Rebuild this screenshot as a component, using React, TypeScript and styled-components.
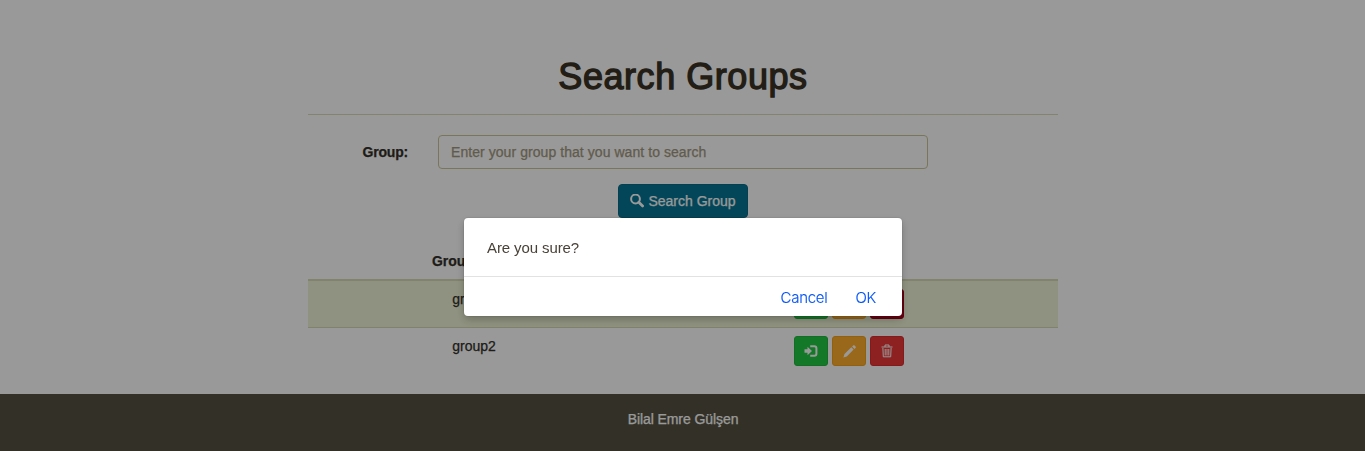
import React from 'react';
import styled, { createGlobalStyle } from 'styled-components';

const GlobalStyle = createGlobalStyle`
  * { box-sizing: border-box; }
  body {
    margin: 0;
    background: #fff;
    color: #33302a;
    font: 14px/20px "Liberation Sans", Arial, sans-serif;
    overflow: hidden;
  }
`;

const Page = styled.div`
  min-height: 451px;
  display: flex;
  flex-direction: column;
  -webkit-text-stroke: 0.25px currentColor;
`;

const Container = styled.main`
  width: 750px;
  margin: 0 auto;
  padding-top: 57px;
  position: relative;
  left: 0.5px;
`;

const Title = styled.h1`
  margin: 0;
  height: 57px;
  font-size: 36px;
  line-height: 39px;
  font-weight: 400;
  letter-spacing: 0.55px;
  -webkit-text-stroke: 1.3px #393226;
  color: #393226;
  text-align: center;
`;

const Divider = styled.hr`
  margin: 0 0 20px;
  border: 0;
  height: 1px;
  background: #d9dcb9;
`;

const FormRow = styled.div`
  display: flex;
  align-items: center;
  height: 34px;
  margin-bottom: 15px;
`;

const Label = styled.label`
  width: 100px;
  margin-right: 30px;
  font-weight: 700;
  text-align: right;
  letter-spacing: -0.2px;
`;

const Input = styled.input`
  width: 490px;
  height: 34px;
  padding: 6px 12px;
  border: 1px solid #c9c798;
  border-radius: 4px;
  background: #fff;
  font: inherit;
  letter-spacing: 0.06px;
  &::placeholder { color: #a29880; opacity: 1; }
`;

const SearchButton = styled.button`
  display: flex;
  align-items: center;
  justify-content: center;
  gap: 4px;
  width: 130px;
  height: 34px;
  margin: 0 auto 33px;
  padding: 0;
  border: 1px solid #066b87;
  border-radius: 4px;
  background: #087694;
  color: #fff;
  font: inherit;
  -webkit-text-stroke: inherit;
`;

const Row = styled.div<{ $striped?: boolean }>`
  display: grid;
  grid-template-columns: 332px 418px;
  justify-items: center;
  height: ${(p) => (p.$striped ? 47 : 46)}px;
  padding-top: 8px;
  background: ${(p) => (p.$striped ? '#eff4d5' : 'transparent')};
  border-bottom: ${(p) => (p.$striped ? '1px solid #d6d9b2' : '0')};
`;

const HeadRow = styled(Row)`
  height: 30px;
  padding-top: 0;
  font-weight: 700;
  border-bottom: 2px solid #d9dab4;
`;

const Actions = styled.div`
  display: flex;
  gap: 4px;
`;

const ActionButton = styled.button<{ $bg: string; $edge: string }>`
  display: flex;
  align-items: center;
  justify-content: center;
  width: 34px;
  height: 30px;
  padding: 0;
  border: 1px solid ${(p) => p.$edge};
  border-radius: 3px;
  background: ${(p) => p.$bg};
  color: #fff;
`;

const Footer = styled.footer`
  height: 57px;
  margin-top: 20px;
  padding: 15px 0 0 1px;
  background: #555041;
  color: #fff;
  text-align: center;
  letter-spacing: -0.08px;
`;

const Backdrop = styled.div`
  position: fixed;
  inset: 0;
  background: rgba(0, 0, 0, 0.4);
`;

const Dialog = styled.div`
  position: absolute;
  left: 464px;
  top: 218px;
  width: 438px;
  height: 98px;
  border-radius: 4px;
  background: #fff;
  box-shadow: 0 0 0 1px rgba(0, 0, 0, 0.06), 0 4px 8px rgba(0, 0, 0, 0.22);
`;

const Message = styled.div`
  height: 59px;
  padding: 20px 23px 0;
  border-bottom: 1px solid #e2e2e2;
  color: #4a4238;
  font-size: 15px;
  letter-spacing: -0.1px;
`;

const DialogActions = styled.div`
  display: flex;
  justify-content: flex-end;
  gap: 28px;
  padding: 11px 26px 0 0;
`;

const LinkButton = styled.button`
  padding: 0;
  border: 0;
  background: none;
  color: #0b57f5;
  font: 300 15px/20px Inter, sans-serif;
  letter-spacing: -0.28px;
  -webkit-text-stroke: 0.15px currentColor;
`;

const SearchIcon = () => (
  <svg width="14" height="14" viewBox="0 0 14 14" fill="none" stroke="currentColor">
    <circle cx="5.5" cy="5" r="4.4" strokeWidth="2" />
    <path d="M8.8 8.2 12.6 12" strokeWidth="2.7" strokeLinecap="round" />
  </svg>
);

const JoinIcon = () => (
  <svg width="14" height="12" viewBox="0 0 14 12" fill="currentColor">
    <path d="M.5 4.3h3V1.8L8 6l-4.5 4.2V7.7h-3z" />
    <path d="M6.2 1.2h4.2c1.3 0 2 .7 2 2v5.6c0 1.3-.7 2-2 2H6.2" fill="none" stroke="currentColor" strokeWidth="2" />
  </svg>
);

const PencilIcon = () => (
  <svg width="13" height="13" viewBox="0 0 13 13" fill="currentColor">
    <path d="m.4 12.6 1.1-3.5 6.8-6.8 2.3 2.3-6.8 6.8zM9.1 1.5l1-1c.5-.5 1-.5 1.5 0l.9.9c.5.5.5 1 0 1.5l-1.1 1z" />
  </svg>
);

const TrashIcon = () => (
  <svg width="12" height="14" viewBox="0 0 12 14" fill="none" stroke="currentColor">
    <path d="M.5 3h11M4 3V1h4v2M1.9 4l.4 8.8h7.4l.4-8.8M4.2 5v6.5M6 5v6.5M7.8 5v6.5" />
  </svg>
);

const RowActions = ({ pressed }: { pressed?: boolean }) => (
  <Actions>
    <ActionButton $bg="#21c842" $edge="#1eb83c" aria-label="Join"><JoinIcon /></ActionButton>
    <ActionButton $bg="#ffad2d" $edge="#f5a11b" aria-label="Edit"><PencilIcon /></ActionButton>
    <ActionButton $bg={pressed ? '#b5001e' : '#eb3838'} $edge={pressed ? '#a0001a' : '#dc2c2c'} aria-label="Delete">
      <TrashIcon />
    </ActionButton>
  </Actions>
);

export default function App() {
  return (
    <>
      <GlobalStyle />
      <Page>
        <Container>
          <Title>Search Groups</Title>
          <Divider />
          <FormRow>
            <Label htmlFor="group">Group:</Label>
            <Input id="group" placeholder="Enter your group that you want to search" />
          </FormRow>
          <SearchButton><SearchIcon />Search Group</SearchButton>
          <HeadRow><span>Group Name</span></HeadRow>
          <Row $striped><span>group1</span><RowActions pressed /></Row>
          <Row><span>group2</span><RowActions /></Row>
        </Container>
        <Footer>Bilal Emre Gülşen</Footer>
      </Page>
      <Backdrop>
        <Dialog role="dialog">
          <Message>Are you sure?</Message>
          <DialogActions>
            <LinkButton>Cancel</LinkButton>
            <LinkButton>OK</LinkButton>
          </DialogActions>
        </Dialog>
      </Backdrop>
    </>
  );
}
